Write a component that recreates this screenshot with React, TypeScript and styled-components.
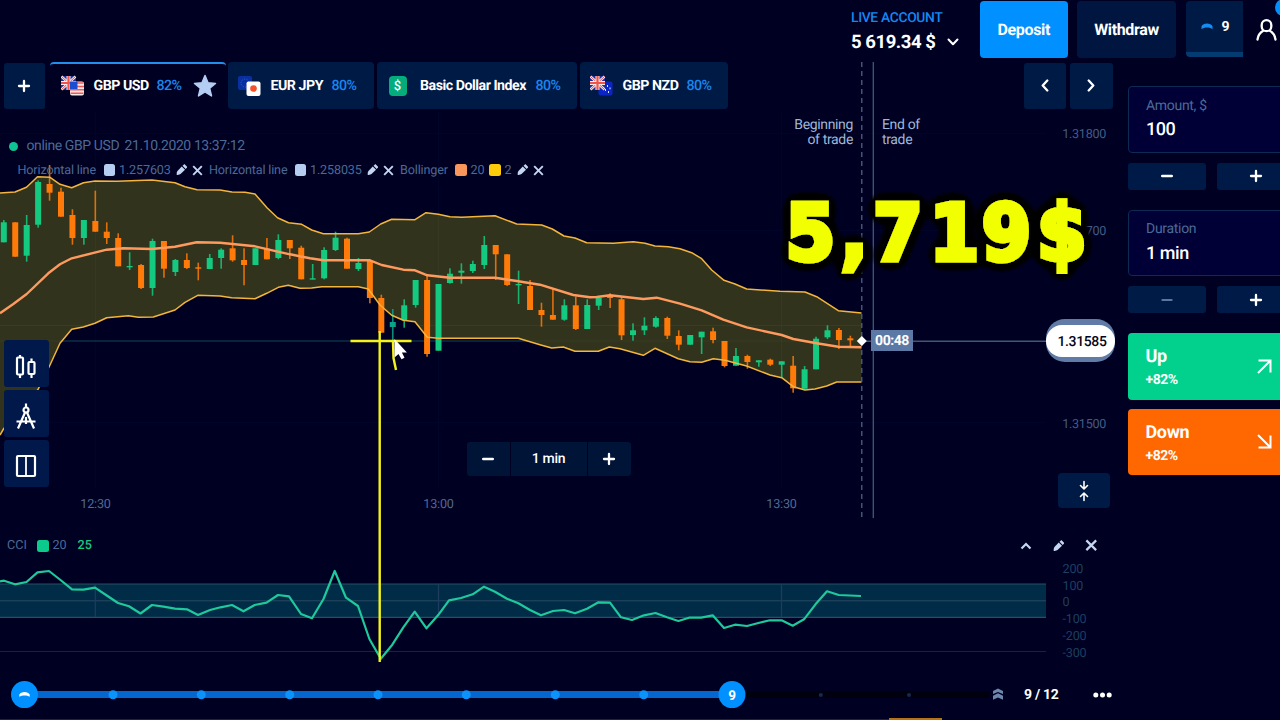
import React from "react";
import styled, { createGlobalStyle, css } from "styled-components";

const c = {
  bg: "#000022",
  panel: "#001a46",
  field: "#000036",
  blue: "#0090ff",
  link: "#1a86ee",
  muted: "#4c6a96",
  pale: "#c3d6f2",
  green: "#14ca80",
  orange: "#ff7a08",
};

const GlobalStyle = createGlobalStyle`
  * { box-sizing: border-box; }
  body { margin: 0; background: ${c.bg}; font-family: Roboto, "Liberation Sans", sans-serif; color: #fff; overflow: hidden; text-rendering: geometricPrecision; }
  svg { display: block; }
  button { font: inherit; color: inherit; border: 0; padding: 0; margin: 0; text-rendering: inherit; }
`;

const Page = styled.div`
  position: relative;
  width: 1280px;
  height: 720px;
  display: flex;
  flex-direction: column;
  overflow: hidden;
  background: ${c.bg};
`;

/* ---------- header ---------- */

const Header = styled.header`
  flex: none;
  height: 62px;
  padding: 1px 0 0 851px;
  display: flex;
  align-items: flex-start;
  > * { flex: none; }
`;

const Account = styled.div`
  width: 129px;
  padding-top: 9px;
  white-space: nowrap;
`;

const AccountKind = styled.div`
  font-size: 13.8px;
  line-height: 16px;
  font-weight: 500;
  letter-spacing: -0.3px;
  color: #1488f2;
`;

const Balance = styled.div`
  display: flex;
  align-items: center;
  gap: 12px;
  margin-top: 4.5px;
  font-size: 18.5px;
  line-height: 23px;
  font-weight: 700;
  letter-spacing: -0.45px;
`;

const HeaderButton = styled.button<{ $w: number; $primary?: boolean }>`
  width: ${(p) => p.$w}px;
  height: 56.5px;
  border-radius: 4px;
  background: ${(p) => (p.$primary ? c.blue : "#001640")};
  font-size: 16px;
  font-weight: 700;
  letter-spacing: -0.35px;
  margin-right: 9.5px;
`;

const Level = styled.div`
  width: 57px;
  height: 56px;
  padding: 0 0 0 3px;
  display: flex;
  align-items: center;
  justify-content: center;
  gap: 8px;
  border-bottom: 5px solid #043b70;
  border-radius: 4px 0 0 4px;
  background: ${c.panel};
  font-size: 14px;
  font-weight: 700;
`;

const Profile = styled.div`
  position: relative;
  width: 24px;
  margin: 17px 0 0 13px;
`;

const NoticeDot = styled.span`
  position: absolute;
  left: 19px;
  top: -19px;
  width: 17px;
  height: 17px;
  border-radius: 50%;
  background: ${c.blue};
`;

/* ---------- body ---------- */

const Body = styled.div`
  flex: 1;
  display: flex;
  min-height: 0;
`;

const Main = styled.main`
  position: relative;
  flex: none;
  width: 1128px;
  display: flex;
  flex-direction: column;
`;

const ChartLayer = styled.svg`
  position: absolute;
  left: 0;
  top: 0;
`;

const Tabs = styled.nav`
  position: relative;
  height: 47px;
  padding: 0 15.5px 0 4px;
  display: flex;
  align-items: flex-start;
`;

const SquareButton = styled.button<{ $w: number; $shift?: number }>`
  flex: none;
  width: ${(p) => p.$w}px;
  height: 45.5px;
  margin-top: 1px;
  padding-right: ${(p) => p.$shift ?? 0}px;
  display: grid;
  place-items: center;
  border-radius: 3px;
  background: ${c.panel};
`;

const Tab = styled.div<{ $w: number; $active?: boolean }>`
  flex: none;
  width: ${(p) => p.$w}px;
  height: 47px;
  margin-left: 3px;
  padding: 1px 0 0 10px;
  display: flex;
  align-items: center;
  border-radius: 4px;
  background: ${c.panel};
  font-size: 14.2px;
  font-weight: 700;
  white-space: nowrap;
  ${(p) =>
    p.$active &&
    css`
      background: transparent;
      border-top: 2.5px solid #2090ee;
      padding: 0 0 0.5px 11px;
      margin-left: 5px;
      margin-right: -1px;
    `}
  > svg { flex: none; }
`;

const TabName = styled.span<{ $w: number }>`
  width: ${(p) => p.$w}px;
  margin-left: 9.5px;
  letter-spacing: -0.48px;
`;

const Rate = styled.span`
  width: 26px;
  margin-left: 8px;
  margin-right: 10px;
  font-weight: 500;
  letter-spacing: -0.6px;
  color: ${c.link};
`;

const TabNav = styled.div`
  display: flex;
  gap: 4px;
  margin-left: auto;
`;

const Stage = styled.section`
  position: relative;
  height: 409px;
  padding: 29px 0 0;
`;

const Status = styled.div`
  display: flex;
  align-items: center;
  padding-left: 9px;
  font-size: 14px;
  line-height: 17px;
  color: ${c.muted};
  white-space: nowrap;
  span { width: 98px; margin-left: 8.5px; letter-spacing: -0.4px; }
  b { font-weight: 400; letter-spacing: -0.4px; }
`;

const Dot = styled.i`
  flex: none;
  width: 9px;
  height: 9px;
  border-radius: 50%;
  background: #0fc493;
`;

const Legend = styled.div`
  display: flex;
  align-items: center;
  height: 16px;
  margin-top: 7px;
  padding-left: 17.5px;
  font-size: 12.6px;
  letter-spacing: -0.15px;
  color: ${c.muted};
  white-space: nowrap;
  > * { flex: none; }
`;

const LegendName = styled.span<{ $w: number }>`
  width: ${(p) => p.$w}px;
`;

const LegendValue = styled.span<{ $w: number }>`
  width: ${(p) => p.$w}px;
`;

const Swatch = styled.i<{ $c: string }>`
  flex: none;
  width: 11.5px;
  height: 12px;
  margin-right: 4px;
  border-radius: 2.5px;
  background: ${(p) => p.$c};
`;

const LegendTools = styled.span`
  display: flex;
  align-items: center;
  gap: 4.5px;
  margin-right: 6.5px;
`;

const Tools = styled.div`
  position: absolute;
  left: 3.5px;
  top: 231px;
  display: flex;
  flex-direction: column;
  gap: 3px;
`;

const ToolButton = styled.button`
  width: 45.5px;
  height: 47px;
  padding-top: 4px;
  display: grid;
  place-items: center;
  border-radius: 3px;
  background: #00194a;
`;

const Zoomer = styled.div`
  position: absolute;
  left: 466.5px;
  top: 333px;
  display: grid;
  grid-template-columns: 43px 76px 43px;
  gap: 1px;
  height: 33.5px;
  font-size: 14px;
  font-weight: 500;
  letter-spacing: -0.25px;
  > * { display: grid; place-items: center; background: #001438; }
  > :first-child { border-radius: 3px 0 0 3px; }
  > :last-child { border-radius: 0 3px 3px 0; }
`;

const FitButton = styled.button`
  position: absolute;
  left: 1058px;
  top: 364px;
  width: 52px;
  height: 35px;
  display: grid;
  place-items: center;
  border-radius: 4px;
  background: ${c.panel};
`;

const TradeNote = styled.div<{ $x: number; $right?: boolean }>`
  position: absolute;
  top: 9px;
  left: ${(p) => p.$x}px;
  width: 63px;
  font-size: 14px;
  line-height: 15px;
  letter-spacing: -0.35px;
  color: #9fb7d8;
  text-align: ${(p) => (p.$right ? "right" : "left")};
`;

const Countdown = styled.div`
  position: absolute;
  left: 871px;
  top: 221px;
  width: 42px;
  height: 21px;
  background: #5c79a6;
  font-size: 14px;
  font-weight: 700;
  line-height: 22px;
  text-align: center;
  letter-spacing: -0.45px;
`;

const PriceTag = styled.div`
  position: absolute;
  left: 1046px;
  top: 210px;
  width: 69px;
  height: 43px;
  padding: 6px 0 5px;
  border-radius: 19px;
  background: #607ba6;
  span {
    display: block;
    height: 32px;
    padding-left: 3px;
    border-radius: 16px;
    background: #fff;
    color: #05051a;
    font-size: 14px;
    font-weight: 500;
    line-height: 35px;
    text-align: center;
    letter-spacing: -0.35px;
  }
`;

/* ---------- CCI ---------- */

const Cci = styled.section`
  height: 152px;
  display: flex;
  flex-direction: column;
`;

const CciHead = styled.div`
  display: flex;
  align-items: center;
  height: 18px;
  margin-top: 18px;
  padding: 1px 30.5px 0 7px;
  font-size: 12.6px;
  color: ${c.muted};
`;

const CciNow = styled.span`
  color: ${c.green};
  font-weight: 500;
`;

const CciActions = styled.div`
  display: flex;
  align-items: center;
  gap: 21px;
  margin-left: auto;
`;

/* ---------- progress ---------- */

const Progress = styled.footer`
  display: flex;
  align-items: center;
  height: 50px;
  margin-top: -0.5px;
  padding-left: 11px;
`;

const Counter = styled.span`
  width: 36px;
  margin: 0 32.5px 0 20px;
  padding-top: 0.5px;
  font-size: 14px;
  font-weight: 700;
  letter-spacing: -0.3px;
  white-space: nowrap;
`;

/* ---------- order form ---------- */

const Side = styled.aside`
  flex: none;
  width: 166px;
  padding-top: 24px;
`;

const Field = styled.div`
  height: 66.5px;
  padding: 8.5px 17px 0;
  border: 1px solid #0c2a52;
  border-radius: 4px;
  background: ${c.field};
`;

const FieldLabel = styled.div`
  font-size: 14px;
  line-height: 20px;
  letter-spacing: -0.3px;
  color: ${c.muted};
`;

const FieldValue = styled.div`
  margin-top: 1.5px;
  font-size: 18px;
  line-height: 26px;
  font-weight: 500;
  letter-spacing: -0.45px;
`;

const Steppers = styled.div`
  display: grid;
  grid-template-columns: 78px 77px;
  gap: 11px;
  margin: 10px 0 20px;
`;

const Step = styled.button<{ $off?: boolean }>`
  height: 27px;
  display: grid;
  place-items: center;
  border-radius: 3px;
  background: ${(p) => (p.$off ? "#001b45" : "#001a48")};
  color: ${(p) => (p.$off ? "#5c779c" : "#fff")};
`;

const Trade = styled.button<{ $c: string }>`
  width: 166px;
  height: 66.5px;
  margin-bottom: 9px;
  padding: 0 22.5px 0 17.5px;
  display: flex;
  align-items: center;
  justify-content: space-between;
  border-radius: 4px;
  background: ${(p) => p.$c};
  text-align: left;
  > div { padding-top: 5px; }
`;

const TradeName = styled.div`
  font-size: 18px;
  line-height: 24px;
  font-weight: 700;
  letter-spacing: -0.35px;
`;

const TradeRate = styled.div`
  font-size: 14px;
  line-height: 23px;
  font-weight: 700;
  letter-spacing: -0.45px;
`;

const Annotations = styled.svg`
  position: absolute;
  left: 0;
  top: 0;
  pointer-events: none;
`;

/* ---------- icons ---------- */

type StrokeProps = { w: number; h?: number; d: string; s?: number; color?: string; join?: "round" | "miter" };
const Stroke = ({ w, h = w, d, s = 2, color = "currentColor", join = "round" }: StrokeProps) => (
  <svg width={w} height={h} viewBox={`0 0 ${w} ${h}`} fill="none" stroke={color} strokeWidth={s} strokeLinecap={join === "round" ? "round" : "butt"} strokeLinejoin={join}>
    <path d={d} />
  </svg>
);
const Plus = () => <Stroke w={14} d="M7 2v10M2 7h10" s={2.3} />;
const Minus = () => <Stroke w={14} d="M2.3 7h9.4" s={2.6} />;
const Close = ({ size = 12 }: { size?: number }) => (
  <svg width={size} height={size} viewBox="0 0 12 12" stroke={c.pale} strokeWidth="2.1" fill="none">
    <path d="M1.3 1.3l9.4 9.4M10.7 1.3L1.3 10.7" />
  </svg>
);
const Pencil = () => (
  <svg width="11.5" height="11.5" viewBox="0 0 12 12" fill={c.pale}>
    <path d="M.8 11.4c-.3-1.9.1-3.4.7-4.2L6 2.6 9.4 6 5 10.3c-1 .9-2.6 1.3-4.2 1.1z" />
    <path d="M6.8 1.9L8 .7c.5-.5 1-.5 1.5 0l1.8 1.8c.5.5.5 1 0 1.5l-1.2 1.2z" />
  </svg>
);

const UnionJack = () => (
  <g>
    <rect x="0" y="1" width="15" height="14" rx="2" fill="#1f2f9c" />
    <path d="M.5 1.5l14 13M14.5 1.5l-14 13" stroke="#f4e6ee" strokeWidth="2.4" />
    <path d="M.5 1.5l14 13M14.5 1.5l-14 13" stroke="#ee5548" strokeWidth="1" />
    <path d="M7.5 1v14M0 8h15" stroke="#f8ecf0" strokeWidth="4" />
    <path d="M7.5 1v14M0 8h15" stroke="#f2544a" strokeWidth="2.2" />
  </g>
);

const GbpUsd = () => (
  <svg width="23" height="22" viewBox="0 0 23 22">
    <UnionJack />
    <rect x="9" y="6.5" width="14" height="14" rx="2" fill="#f6e6e8" />
    <path d="M9.5 8h13M9 11.500h14M9 14.800h14M9.500 18.300h13" stroke="#ef5a58" strokeWidth="1.5" />
    <rect x="9" y="6.5" width="7.5" height="7.5" fill="#1b4dd0" />
  </svg>
);
const EurJpy = () => (
  <svg width="23" height="22" viewBox="0 0 23 22">
    <rect x="0" y="1" width="14" height="14" rx="2" fill="#0a2fa0" />
    <circle cx="7" cy="8" r="4" fill="none" stroke="#2f6cd0" strokeWidth="1" strokeDasharray="1 1.5" />
    <rect x="8.5" y="6.5" width="14" height="14.5" rx="2" fill="#fff" />
    <circle cx="15.5" cy="13.5" r="3.3" fill="#f5512c" />
  </svg>
);
const GbpNzd = () => (
  <svg width="23" height="22" viewBox="0 0 23 22">
    <rect x="8.5" y="6.5" width="14" height="14" rx="2" fill="#0b24c4" />
    <UnionJack />
    <path d="M17.500 10v2M20 12.500v1.800M15.500 14v2M18.500 16v2" stroke="#dbe4ff" strokeWidth="1" />
  </svg>
);
const DollarBox = styled.span`
  flex: none;
  width: 18px;
  height: 20px;
  margin: 0 4px 0 1.5px;
  display: grid;
  place-items: center;
  border-radius: 4px;
  background: #05ad7c;
  font-size: 13px;
  font-weight: 500;
`;

/* ---------- chart data ---------- */

const STEP = 11.44;
const X0 = 3.8;

/* [rising, body top, body bottom, wick top, wick bottom] */
const candles: [number, number, number, number, number][] = [
  [1, 222.3, 242.3, 220, 242.3], [0, 222.3, 256.7, 222.3, 256.7], [1, 225, 255.7, 215, 261.7], [1, 182, 224.7, 180.5, 227.7],
  [0, 184, 192.7, 165, 200.7], [0, 191.7, 216.7, 187.7, 216.7], [0, 215, 238, 209.3, 244.7], [1, 220, 238, 220, 244.7],
  [0, 221, 231.7, 190.7, 231.7], [0, 231.7, 238, 222.3, 244], [0, 238, 266.3, 233.3, 266.3], [1, 266, 267.3, 252.3, 270],
  [0, 265, 288, 264, 289], [1, 241, 288, 238.7, 295.7], [0, 241, 268.7, 241, 277.7], [1, 260, 272, 259, 276],
  [0, 260, 268, 253.3, 269], [0, 267.3, 268.7, 262.7, 280.3], [1, 258, 269, 254, 269], [1, 249.7, 258, 248.3, 268.7],
  [0, 248.3, 260.3, 235.3, 261.7], [0, 260, 265, 248.3, 285.3], [1, 248.3, 265, 248.3, 265], [0, 248.7, 259.3, 238, 259.3],
  [1, 240, 258, 234.3, 259.3], [0, 240, 248.3, 240, 259], [0, 247.7, 279.3, 245.7, 279.3], [1, 278.3, 279.3, 264, 279.3],
  [1, 250, 278.3, 247.3, 279.3], [1, 237.7, 250, 231.7, 251], [0, 238.7, 268.7, 237.7, 268.7], [1, 263, 269, 258, 271],
  [0, 261, 298, 261, 303.3], [0, 298, 332.7, 294.7, 332.7], [1, 322, 327, 309, 347], [1, 305.3, 320, 299.3, 327.7],
  [1, 280, 305, 280, 307.7], [0, 280, 354, 275, 356.7], [1, 284, 350.7, 284, 350.7], [1, 273.7, 283, 268.3, 283.7],
  [1, 270.7, 272.7, 263.3, 283.7], [1, 264, 271, 260.7, 273], [1, 245, 265, 236, 269], [0, 245, 254.3, 245, 280],
  [0, 254.3, 285, 254.3, 286], [1, 284, 285.3, 270.7, 304], [0, 286, 310, 280, 310], [0, 310, 315, 302.7, 326.7],
  [0, 315, 319.7, 288.3, 319.7], [1, 305.3, 319.7, 299.3, 320.7], [0, 305.3, 329, 296.7, 330], [1, 305, 329, 299.3, 329],
  [1, 297.7, 305.7, 297.7, 310], [0, 295.5, 298, 293.3, 308], [0, 299.3, 335.3, 296.7, 340], [1, 330.3, 335, 323.3, 340.7],
  [1, 325.7, 330.3, 317.3, 335], [1, 318, 326.7, 316.3, 327.7], [0, 318, 335.7, 316.7, 339], [0, 336, 344.7, 330.3, 350.3],
  [1, 335, 344.7, 335, 344.7], [1, 331.7, 337.3, 331.7, 354], [0, 331.3, 340, 327.7, 343.3], [0, 341, 366, 341, 367.3],
  [1, 356, 365.7, 348, 365.7], [0, 356, 362, 354.7, 368.7], [1, 360.3, 362.3, 360.3, 366.7], [0, 359.7, 364.7, 358.7, 366],
  [1, 361.3, 364.7, 361.3, 377.3], [0, 365.7, 388.3, 356, 392.7], [1, 369.3, 388.7, 366, 388.7], [1, 338.7, 369.3, 336.7, 369.3],
  [1, 330.3, 337.3, 325.3, 339], [0, 330, 340, 328, 349], [0, 338.3, 340.3, 335.7, 346.7],
];

const upper =
  "0,193 15,192 26.5,187.3 37.5,176.7 50,177.3 60,184.3 71.7,187.7 83.5,182.7 95,181 117,181.3 152,180 175,182.7 185,186.7 197,189.7 220,190 232,192 245,192.3 255,194 267,207.7 277.5,217.7 288.5,222.7 301.7,224.3 311.7,230 323.3,233.7 358.3,233.7 369.3,232 380.7,224 391.7,219.3 415,219.7 426,212.7 438.3,214.3 450,216.7 461.7,217.3 495,215.7 516.7,224 541.7,225 552.3,229 564,236 575,238 586.7,242.7 613.3,243.3 633.3,241.7 645,243.3 655,246 668.3,246.7 680,248.7 691.7,252.7 701.7,258.7 711.7,270 724,280.3 735,284 746.7,289 780,291.3 805,292 816.7,296.7 838.3,310.7 861.5,313";

const lower =
  "0,435 3.5,429 15,414 26.5,405 38.3,389 50,365 60,343.3 71.7,329.3 83.3,327 95,323.3 106.7,317.7 128.3,315.7 138.3,317.3 153.3,317 175,310 185,302.3 197.7,295.3 220,296 231.7,297.7 255,298.7 266.7,293.3 278.3,287.3 288.3,285.3 300,288.2 311.7,288 321.7,286.7 358.3,286.7 368.3,289 380,305 391.7,315.3 403.3,320.3 415,321.7 427.3,337.3 438.3,338.3 518.3,338.3 540,344.7 551.7,348 563.3,347 575,351.3 598.3,351.3 609.3,347 620,348.7 643.3,355.3 655,348.3 678.3,358.7 690,361.7 701.7,362.3 713.3,358.7 725,360.3 746.7,366 770,375 781.7,377.7 793.3,386.7 805,390 815,389 826.7,386 836.7,382 861.5,382";

const middle =
  "0,313.3 13.3,304 26.7,294 48.3,273.3 60,264.3 71.7,258.3 106.7,249.7 123.3,248.3 151.7,249 175,246.7 196.7,242.3 220,242.7 255,246.3 276.7,251.3 290,254.3 310,258.3 323.3,260.3 370,260.3 381.7,265 403.3,269.7 415,270.3 427.3,275.3 450,277.7 495,277.7 516.7,281 540,284.7 573.3,295 590,297.3 596.7,297 610,295.3 643.3,299 656.7,297.7 680,303.7 701.7,310.3 723.3,319.7 746.7,327.3 781.7,335 793.3,339 816.7,343.3 838.3,346.7 861.5,347.3";

const cciLine =
  "0,581.3 4,580.7 15,584.3 26.5,582 37.5,572.3 49,571 60.5,580 72,589.3 83.5,589.7 95,587.7 106,595 118,603 129,606.3 140.5,613.5 152,605 163.5,606.7 175,608.7 187,609.3 198,615 210,610 220.5,607.3 232,605 243.5,611.3 254.7,605 266.5,602.7 278,595 289,596.3 301,614 312,618.3 323.5,599 334.7,571 346,597.7 358,606 369.4,639 380.8,658.7 392.3,644.7 403.3,627.3 414.7,611.7 426.5,628.3 438,615.3 449,600.3 461,598 472.7,594.3 484,586.7 495,591.7 507,598.7 518.4,603.3 530,610 541,615.3 553,611 564,610 575,613.3 587,608.7 598.4,602.3 610,602.7 621,617.3 632,620 644,615.3 655.5,613 667,617.3 678.4,621 689,617.7 701.2,617.7 712.7,615.3 724,628 735,624.7 747,626 758.4,623 769.8,620.3 781.6,620.3 792.7,625.7 804,619.3 815.5,604.3 827,591.3 838.8,595 861,596";

const area = upper + " " + lower.split(" ").reverse().join(" ");

const PriceChart = () => (
  <ChartLayer width="1128" height="456" viewBox="0 62 1128 456">
    <path d="M95.5 112v375M438.5 112v375M781.5 112v375M0 133.500H1046M0 230.500H1046M0 422.500H1046" stroke="#06103c" opacity=".3" />
    <path d="M0 341H862" stroke="#0a2f48" strokeWidth="1.3" />
    <polygon points={area} fill="#31331c" />
    <clipPath id="band"><polygon points={area} /></clipPath>
    <path d="M0 325.500H862M0 341H862" stroke="#42492f" strokeWidth="1" opacity=".45" clipPath="url(#band)" />
    <path d="M95.5 182V323M438.5 215V338M781.5 292V377" stroke="#42492f" strokeWidth="1" opacity=".3" />
    {candles.map(([up, t, b, wt, wb], i) => {
      const x = X0 + i * STEP;
      const fill = up ? (i === 34 ? "#0aa38a" : c.green) : c.orange;
      return (
        <g key={i} fill={fill}>
          <rect x={x - 0.8} y={wt} width="1.6" height={wb - wt} opacity=".85" />
          <rect x={x - 3} y={t} width="6" height={Math.max(b - t, 1.3)} />
        </g>
      );
    })}
    <g fill="none" strokeLinejoin="round">
      <polyline points={upper} stroke="#f3b53c" strokeWidth="1.5" />
      <polyline points={lower} stroke="#f3b53c" strokeWidth="1.5" />
      <polyline points={middle} stroke="#ff9a5e" strokeWidth="2.4" />
    </g>
    <path d="M861.8 62V518" stroke="#56698c" strokeWidth="1.2" strokeDasharray="5 4" />
    <path d="M873.3 62V518" stroke="#3d5c72" strokeWidth="1.3" />
    <path d="M862 341.200H1046" stroke="#3f5876" strokeWidth="1.4" />
    <path d="M861.8 336l5 5-5 5-5-5z" fill="#fff" />
    <g fill="#425c84" fontSize="12.6" textAnchor="end" letterSpacing="-0.3">
      <text x="1106" y="138">1.31800</text>
      <text x="1106" y="234.5">700</text>
      <text x="1106" y="427.5">1.31500</text>
    </g>
    <g fill="#506a94" fontSize="12.6" textAnchor="middle" letterSpacing="-0.2">
      <text x="95.5" y="507.5">12:30</text>
      <text x="438.5" y="507.5">13:00</text>
      <text x="781.5" y="507.5">13:30</text>
    </g>
  </ChartLayer>
);

const CciChart = () => (
  <svg width="1128" height="116" viewBox="0 554 1128 116">
    <rect x="0" y="584" width="1046" height="33" fill="#002c48" />
    <path d="M0 584H1046M0 617.300H1046" stroke="#27505f" strokeWidth="1.2" />
    <path d="M0 600.800H1046" stroke="#284863" strokeWidth="1" />
    <path d="M0 651.500H1046" stroke="#152345" strokeWidth="1" />
    <path d="M95.3 584V617M438.5 584V617M781.5 584V617" stroke="#1e3c5e" strokeWidth="1.2" />
    <polyline points={cciLine} fill="none" stroke="#1fc99c" strokeWidth="2.2" strokeLinejoin="round" />
    <g fill="#1d3f60" fontSize="12.6" letterSpacing="-0.2">
      {[200, 100, 0, -100, -200, -300].map((v, i) => (
        <text key={v} x="1062.5" y={573 + i * 16.7}>{v}</text>
      ))}
    </g>
  </svg>
);

const ProgressTrack = () => (
  <svg width="993" height="30" viewBox="11 680 993 30">
    <rect x="740" y="691" width="250" height="7" fill="#00000f" />
    <rect x="24" y="691" width="708" height="7" fill="#0467cf" />
    {[113, 201.3, 289.7, 378, 466.3, 555.3, 643.7].map((x) => (
      <circle key={x} cx={x} cy="694.8" r="4.5" fill="#0c92fb" />
    ))}
    <circle cx="820.8" cy="695" r="2" fill="#16294f" />
    <circle cx="909" cy="695" r="2" fill="#16294f" />
    <circle cx="24.5" cy="694.6" r="13.5" fill={c.blue} />
    <path d="M19.3 696.800v-2.200c1.500-3.600 8.900-3.600 10.400 0v2.200c-2.600-1.600-7.800-1.600-10.400 0z" fill="#fff" />
    <circle cx="732" cy="694.6" r="13.5" fill={c.blue} />
    <text x="732" y="699.5" fontSize="13.5" fontWeight="700" textAnchor="middle" fill="#fff">9</text>
    <g fill="#6d86ac">
      <path d="M993 694v-3l5-2.500 5 2.500v3l-5-1.900z" />
      <path d="M993 699.800v-4l5-2.500 5 2.500v4l-5-2.200z" />
    </g>
  </svg>
);

const App = () => (
  <Page>
    <GlobalStyle />
    <Header>
      <Account>
        <AccountKind>LIVE ACCOUNT</AccountKind>
        <Balance>
          5 619.34 $
          <Stroke w={12} h={8} d="M1.5 1.500L6 6.300l4.500-4.800" s={2} />
        </Balance>
      </Account>
      <HeaderButton $w={87.5} $primary>Deposit</HeaderButton>
      <HeaderButton $w={99}>Withdraw</HeaderButton>
      <Level>
        <svg width="12" height="7" viewBox="0 0 12 7" fill="#138ef5">
          <path d="M.5 6.300V3.200C2.500-.3 9.500-.3 11.500 3.200v3.100C9 4 3 4 .5 6.300z" />
        </svg>
        9
      </Level>
      <Profile>
        <Stroke w={24} h={24} d="M10.5 2.200a4.800 4.800 0 0 1 4.800 4.800v1.400a4.800 4.800 0 0 1-9.600 0V7a4.800 4.800 0 0 1 4.800-4.800zM1.500 21.500c.5-4 2.500-7 5.700-8.800M19.500 21.500c-.5-4-2.500-7-5.700-8.800" s={2.3} />
        <NoticeDot />
      </Profile>
    </Header>

    <Body>
      <Main>
        <PriceChart />
        <Tabs>
          <SquareButton $w={41} $shift={2}><Plus /></SquareButton>
          <Tab $w={176} $active>
            <GbpUsd />
            <TabName $w={55}>GBP USD</TabName>
            <Rate>82%</Rate>
            <svg width="24" height="24" viewBox="0 0 24 24" fill="#b4cdf2" stroke="#b4cdf2" strokeWidth="1.5" strokeLinejoin="round">
              <path d="M12 1.500l3 7.300 7.500.6-5.800 4.900 1.800 7.600L12 17.800l-6.500 4.100 1.800-7.600-5.800-4.900 7.500-.6z" />
            </svg>
          </Tab>
          <Tab $w={146}>
            <EurJpy />
            <TabName $w={53}>EUR JPY</TabName>
            <Rate>80%</Rate>
          </Tab>
          <Tab $w={200}>
            <DollarBox>$</DollarBox>
            <TabName $w={107.5}>Basic Dollar Index</TabName>
            <Rate>80%</Rate>
          </Tab>
          <Tab $w={148}>
            <GbpNzd />
            <TabName $w={56}>GBP NZD</TabName>
            <Rate>80%</Rate>
          </Tab>
          <TabNav>
            <SquareButton $w={42.5}><Stroke w={8} h={13} d="M6.3 1.500L1.700 6.500l4.600 5" s={2.3} /></SquareButton>
            <SquareButton $w={42.5}><Stroke w={8} h={13} d="M1.7 1.500l4.600 5-4.600 5" s={2.3} /></SquareButton>
          </TabNav>
        </Tabs>

        <Stage>
          <Status>
            <Dot />
            <span>online GBP USD</span>
            <b>21.10.2020 13:37:12</b>
          </Status>
          <Legend>
            <LegendName $w={86}>Horizontal line</LegendName>
            <Swatch $c="#b5cdf0" />
            <LegendValue $w={56.5}>1.257603</LegendValue>
            <LegendTools><Pencil /><Close size={11} /></LegendTools>
            <LegendName $w={85.5}>Horizontal line</LegendName>
            <Swatch $c="#b5cdf0" />
            <LegendValue $w={56.5}>1.258035</LegendValue>
            <LegendTools><Pencil /><Close size={11} /></LegendTools>
            <LegendName $w={55}>Bollinger</LegendName>
            <Swatch $c="#f9965c" />
            <LegendValue $w={18.5}>20</LegendValue>
            <Swatch $c="#fccc0a" />
            <LegendValue $w={12.5}>2</LegendValue>
            <LegendTools><Pencil /><Close size={11} /></LegendTools>
          </Legend>

          <TradeNote $x={790} $right>Beginning of trade</TradeNote>
          <TradeNote $x={882}>End of trade</TradeNote>
          <Countdown>00:48</Countdown>
          <PriceTag><span>1.31585</span></PriceTag>

          <Tools>
            <ToolButton>
              <svg width="22" height="26" viewBox="0 0 22 26" fill="none" stroke="#fff" strokeWidth="2.2">
                <rect x="2" y="4.5" width="6" height="17" rx="1" />
                <rect x="13.5" y="9" width="6" height="12" rx="1" />
                <path d="M5 2v2.500M5 21.500V25M16.500 5.500V9M16.500 21v4" />
              </svg>
            </ToolButton>
            <ToolButton>
              <svg width="22" height="28" viewBox="0 0 22 28" fill="none" stroke="#fff" strokeWidth="2.2">
                <circle cx="11" cy="8" r="2.5" />
                <path d="M11 1.500V5M10 10.500L3 26.500M12 10.500l7 16M1.500 19.500h19M11 15v7" />
              </svg>
            </ToolButton>
            <ToolButton>
              <svg width="22" height="24" viewBox="0 0 22 24" fill="none" stroke="#fff" strokeWidth="2.2">
                <rect x="2" y="2" width="18" height="20" rx="1" />
                <path d="M11 2v20" strokeWidth="1.8" />
              </svg>
            </ToolButton>
          </Tools>

          <Zoomer>
            <button><Minus /></button>
            <span>1 min</span>
            <button><Plus /></button>
          </Zoomer>
          <FitButton>
            <Stroke w={12} h={22} d="M6 1.500V8.500M2.500 5.500L6 9l3.500-3.500M6 20.500v-7M2.500 16.500L6 13l3.500 3.500" s={1.6} />
          </FitButton>
        </Stage>

        <Cci>
          <CciHead>
            <LegendName $w={30}>CCI</LegendName>
            <Swatch $c="#0cc98c" />
            <LegendValue $w={25}>20</LegendValue>
            <CciNow>25</CciNow>
            <CciActions>
              <Stroke w={12} h={8} d="M1.5 6.500L6 2l4.500 4.500" s={2.2} color={c.pale} join="miter" />
              <Pencil />
              <Close size={12.5} />
            </CciActions>
          </CciHead>
          <CciChart />
        </Cci>

        <Progress>
          <ProgressTrack />
          <Counter>9 / 12</Counter>
          <svg width="19" height="6" viewBox="0 0 19 6" fill="#fff">
            <circle cx="2.8" cy="3" r="2.5" />
            <circle cx="9.5" cy="3" r="2.5" />
            <circle cx="16.2" cy="3" r="2.5" />
          </svg>
        </Progress>
      </Main>

      <Side>
        <Field>
          <FieldLabel>Amount, $</FieldLabel>
          <FieldValue>100</FieldValue>
        </Field>
        <Steppers>
          <Step><Minus /></Step>
          <Step><Plus /></Step>
        </Steppers>
        <Field>
          <FieldLabel>Duration</FieldLabel>
          <FieldValue>1 min</FieldValue>
        </Field>
        <Steppers>
          <Step $off><Stroke w={14} d="M2.3 7h9.400" s={2} /></Step>
          <Step><Plus /></Step>
        </Steppers>
        <Trade $c="#02d18d">
          <div>
            <TradeName>Up</TradeName>
            <TradeRate>+82%</TradeRate>
          </div>
          <Stroke w={15} d="M1 14L13 2M1.500 1.500h12v12" s={2} join="miter" />
        </Trade>
        <Trade $c="#ff6700">
          <div>
            <TradeName>Down</TradeName>
            <TradeRate>+82%</TradeRate>
          </div>
          <Stroke w={15} d="M1 1l12 12M1.500 13.500h12v-12" s={2} join="miter" />
        </Trade>
      </Side>
    </Body>

    <Annotations width="1280" height="720" viewBox="0 0 1280 720">
      <defs>
        <filter id="halo" x="-10%" y="-30%" width="120%" height="160%">
          <feGaussianBlur in="SourceAlpha" stdDeviation="7" />
          <feComponentTransfer result="spread"><feFuncA type="linear" slope="9" intercept="-0.5" /></feComponentTransfer>
          <feFlood floodColor="#000" />
          <feComposite in2="spread" operator="in" />
          <feMerge><feMergeNode /><feMergeNode in="SourceGraphic" /></feMerge>
        </filter>
      </defs>
      <path d="M0 719.500H889" stroke="#0a2a50" strokeWidth="1" />
      <path d="M889 719H942" stroke="#b87414" strokeWidth="2" />
      <g stroke="#f4f41c" strokeWidth="2.4" fill="none">
        <path d="M350.5 341H411.500" />
        <path d="M379.7 331V662" />
        <path d="M393 342l.5 16 2.500 12" />
      </g>
      <path d="M394.5 339v18.500l4-3.500 3 5.300 3-1.600-2.600-5.200h5z" fill="#fff" />
      <text
        x="786 841 873.5 930 982 1037.5"
        y="259.5"
        fontFamily="'DejaVu Sans Condensed', 'DejaVu Sans', sans-serif"
        fontSize="78"
        fontWeight="700"
        fill="#f2ff00"
        stroke="#f2ff00"
        strokeWidth="5"
        filter="url(#halo)"
      >
        5,719$
      </text>
    </Annotations>
  </Page>
);

export default App;
